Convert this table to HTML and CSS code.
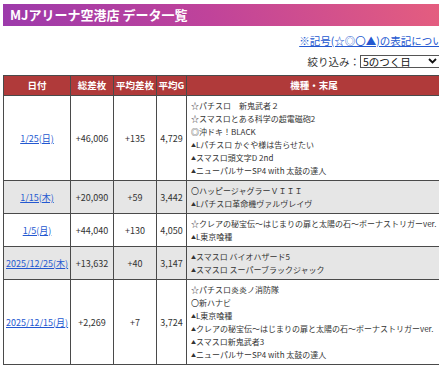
FILE: index.html
```html
<!DOCTYPE html>
<html lang="ja">
<head>
<meta charset="utf-8">
<title>MJアリーナ空港店 データ一覧</title>
<link rel="stylesheet" href="styles.css">
</head>
<body>
<div class="page">
  <h1 class="title">MJアリーナ空港店 データ一覧</h1>
  <div class="note"><a href="#">※記号(☆◎〇▲)の表記について</a></div>
  <div class="filter">
    <span class="filter-label">絞り込み：</span>
    <span class="select-wrap">
      <select class="select"><option>5のつく日</option></select>
      <svg class="chev" width="9" height="6" viewBox="0 0 9 6"><path d="M1 1 L4.5 4.5 L8 1" fill="none" stroke="#111" stroke-width="1.8"/></svg>
    </span>
  </div>
  <table class="data">
    <colgroup><col class="c-date"><col class="c-total"><col class="c-avg"><col class="c-g"><col class="c-model"></colgroup>
    <thead>
      <tr><th>日付</th><th>総差枚</th><th>平均差枚</th><th>平均G</th><th>機種・末尾</th></tr>
    </thead>
    <tbody>
      <tr>
        <td class="date"><a href="#">1/25(日)</a></td><td class="num">+46,006</td><td class="num">+135</td><td class="num">4,729</td>
        <td class="model">☆パチスロ　新鬼武者２<br>☆スマスロとある科学の超電磁砲2<br>◎沖ドキ！BLACK<br><span class="tri">▲</span>Lパチスロ かぐや様は告らせたい<br><span class="tri">▲</span>スマスロ頭文字D 2nd<br><span class="tri">▲</span>ニューパルサーSP4 with 太鼓の達人</td>
      </tr>
      <tr class="alt">
        <td class="date"><a href="#">1/15(木)</a></td><td class="num">+20,090</td><td class="num">+59</td><td class="num">3,442</td>
        <td class="model">〇ハッピージャグラーＶＩＩＩ<br><span class="tri">▲</span>Lパチスロ革命機ヴァルヴレイヴ</td>
      </tr>
      <tr>
        <td class="date"><a href="#">1/5(月)</a></td><td class="num">+44,040</td><td class="num">+130</td><td class="num">4,050</td>
        <td class="model">☆クレアの秘宝伝～はじまりの扉と太陽の石～ボーナストリガーver.<br><span class="tri">▲</span>L東京喰種</td>
      </tr>
      <tr class="alt">
        <td class="date"><a href="#">2025/12/25(木)</a></td><td class="num">+13,632</td><td class="num">+40</td><td class="num">3,147</td>
        <td class="model"><span class="tri">▲</span>スマスロ バイオハザード5<br><span class="tri">▲</span>スマスロ スーパーブラックジャック</td>
      </tr>
      <tr>
        <td class="date"><a href="#">2025/12/15(月)</a></td><td class="num">+2,269</td><td class="num">+7</td><td class="num">3,724</td>
        <td class="model">☆パチスロ炎炎ノ消防隊<br>〇新ハナビ<br><span class="tri">▲</span>L東京喰種<br><span class="tri">▲</span>クレアの秘宝伝～はじまりの扉と太陽の石～ボーナストリガーver.<br><span class="tri">▲</span>スマスロ新鬼武者3<br><span class="tri">▲</span>ニューパルサーSP4 with 太鼓の達人</td>
      </tr>
    </tbody>
  </table>
</div>
</body>
</html>
```
FILE: styles.css
```css
html, body {
  margin: 0;
  padding: 0;
  background: #fff;
}
body {
  font-family: "Noto Sans CJK JP", "Noto Sans", sans-serif;
  color: #333;
}
.page {
  width: 438px;
  margin-left: 3px;
  padding-top: 4px;
}
.title {
  margin: 0;
  width: 460px;
  height: 22px;
  box-sizing: border-box;
  padding-left: 7px;
  line-height: 22px;
  font-size: 13px;
  font-weight: bold;
  color: #fff;
  white-space: nowrap;
  background: linear-gradient(72deg, #9c3aab 0%, #c0439a 45%, #e8607c 100%);
}
.note {
  margin-top: 8px;
  width: 450px;
  text-align: right;
  font-size: 10.5px;
  line-height: 14px;
  white-space: nowrap;
}
.note a {
  color: #2458d0;
  text-decoration: underline;
}
.filter {
  margin-top: 7px;
  display: flex;
  justify-content: flex-end;
  align-items: center;
  height: 13px;
  font-size: 10.5px;
  line-height: 13px;
  color: #333;
}
.filter-label {
  flex: none;
  line-height: 13px;
}
.select-wrap {
  position: relative;
  flex: none;
  display: block;
  width: 81px;
  height: 13px;
}
.select {
  -webkit-appearance: none;
  appearance: none;
  display: block;
  width: 81px;
  height: 13px;
  box-sizing: border-box;
  margin: 0;
  padding: 0 0 0 2px;
  border: 1px solid #555;
  border-radius: 0;
  background: #fff;
  font-family: "Noto Sans CJK JP", sans-serif;
  font-size: 10.5px;
  line-height: 11px;
  color: #111;
}
.chev {
  position: absolute;
  left: 68px;
  top: 3px;
}
.data {
  margin-top: 7px;
  width: 438px;
  table-layout: fixed;
  border-collapse: collapse;
  border: 1px solid #4a4a4a;
}
.c-date { width: 67px; }
.c-total { width: 43px; }
.c-avg { width: 43px; }
.c-g { width: 30px; }
.c-model { width: 255px; }
.data th {
  background: #b03a3a;
  color: #fff;
  font-weight: bold;
  font-size: 9.5px;
  height: 19px;
  padding: 0;
  line-height: 19px;
  border: 1px solid #4a4a4a;
  white-space: nowrap;
}
.data td {
  border: 1px solid #4a4a4a;
  padding: 3px 2px;
  vertical-align: middle;
  line-height: 13px;
}
.data tr.alt td {
  background: #e6e6e6;
}
.date {
  text-align: center;
  font-size: 9px;
  white-space: nowrap;
}
.date a {
  color: #2458d0;
  text-decoration: underline;
}
.num {
  text-align: center;
  font-size: 9px;
  white-space: nowrap;
}
.data td.model {
  padding-left: 4px;
  font-size: 8px;
  white-space: nowrap;
  color: #333;
}
.tri {
  font-size: 5px;
  line-height: 1;
  vertical-align: 1px;
}
```
